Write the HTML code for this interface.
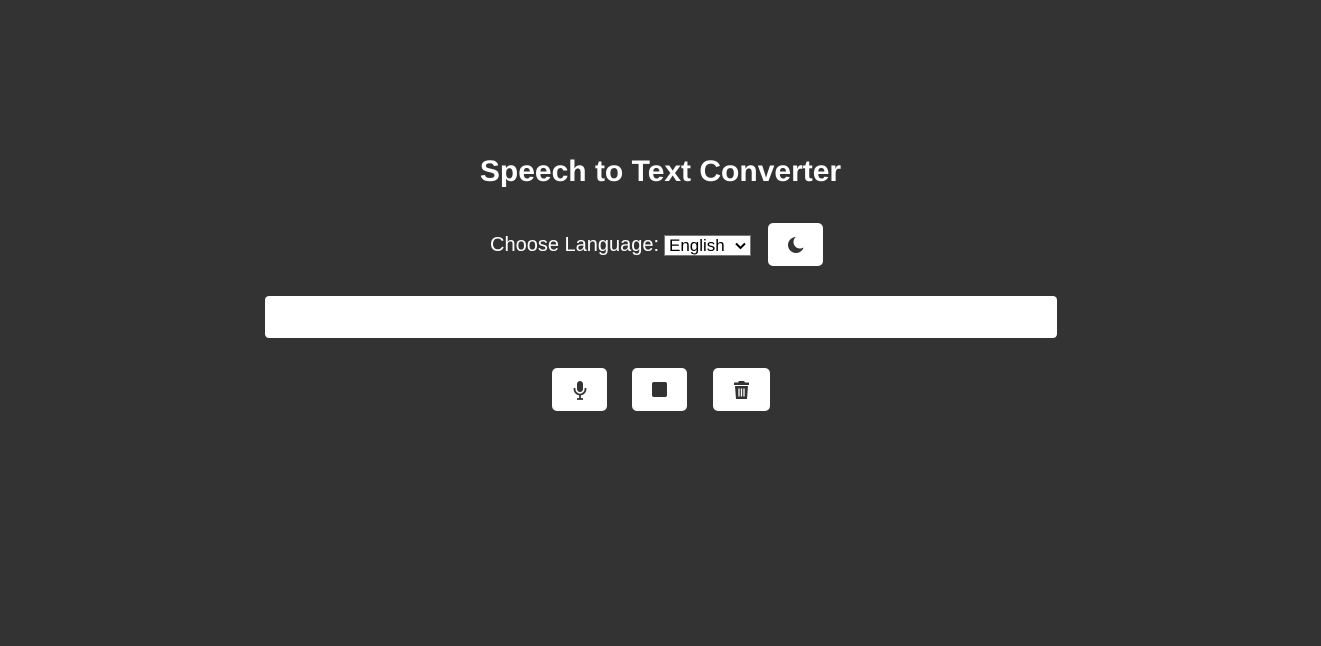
<!DOCTYPE html>
<html><head><style>
body{margin:0;width:1321px;height:646px;background:#333;font-family:"Liberation Sans",sans-serif;color:#fff;position:relative;overflow:hidden}
h1{position:absolute;top:155px;left:0;width:1321px;text-align:center;margin:0;font-size:30px;font-weight:bold}
.lbl{position:absolute;left:490px;top:234px;font-size:20px}
.sel{position:absolute;left:664px;top:235px;width:87px;height:21px;background:#fff;border:1px solid #767676;box-sizing:border-box;color:#000;font-size:17px;line-height:19px;padding-left:4px}
.btn{position:absolute;background:#fff;border-radius:5px;display:flex;align-items:center;justify-content:center}
.inp{position:absolute;left:265px;top:296px;width:792px;height:42px;background:#fff;border-radius:4px}
</style></head><body>
<h1>Speech to Text Converter</h1>
<div class="lbl">Choose Language:</div>
<div class="sel">English<svg style="position:absolute;right:4px;top:6px" width="11" height="8" viewBox="0 0 11 8"><path d="M1 1.5L5.5 6L10 1.5" stroke="#000" stroke-width="2" fill="none"/></svg></div>
<div class="btn" style="left:768px;top:223px;width:55px;height:43px"><svg width="18" height="18" viewBox="0 0 18 18"><defs><mask id="m"><rect width="18" height="18" fill="#fff"/><circle cx="13" cy="6" r="6.5" fill="#000"/></mask></defs><circle cx="9" cy="9" r="8" fill="#333" mask="url(#m)"/></svg></div>
<div class="inp"></div>
<div class="btn" style="left:552px;top:368px;width:55px;height:43px"><svg width="14" height="20" viewBox="0 0 14 20"><rect x="4" y="1" width="6" height="11" rx="3" fill="#333"/><path d="M1.5 8v1a5.5 5.5 0 0 0 11 0V8M7 15v4M4 19h6" stroke="#333" stroke-width="1.8" fill="none"/></svg></div>
<div class="btn" style="left:632px;top:368px;width:55px;height:43px"><div style="width:15px;height:15px;background:#333;border-radius:2px"></div></div>
<div class="btn" style="left:713px;top:368px;width:57px;height:43px"><svg width="17" height="20" viewBox="0 0 17 20"><path d="M6 1h5l1 1.5h4v2.5H1V2.5h4z" fill="#333"/><path d="M2 6h13l-1 13H3z" fill="#333"/><path d="M6 8.5v8M8.5 8.5v8M11 8.5v8" stroke="#fff" stroke-width="1.3"/></svg></div>
</body></html>
